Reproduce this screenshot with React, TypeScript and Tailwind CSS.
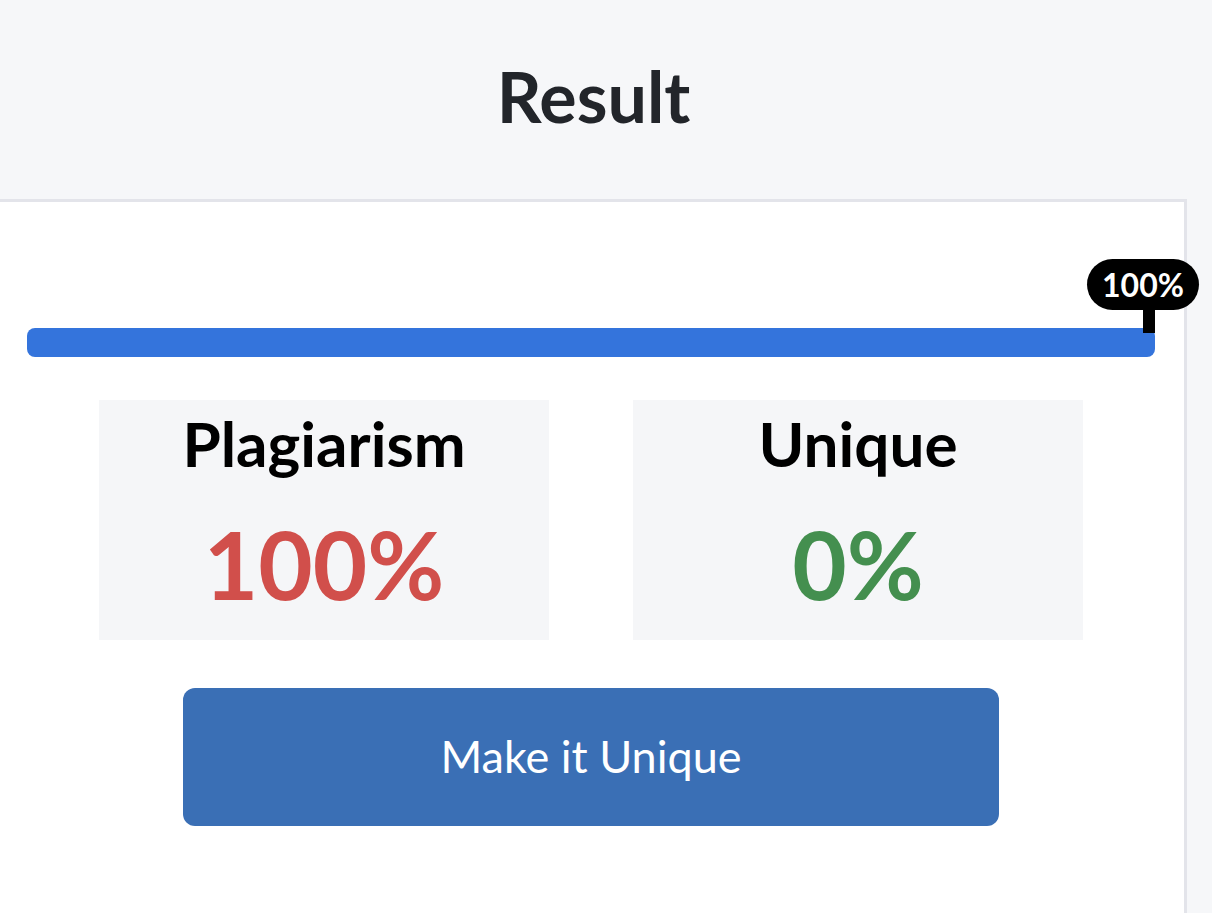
const StatBox = ({ label, value, color }: { label: string; value: string; color: string }) => (
  <div className="flex h-[240px] w-[450px] flex-col items-center bg-[#f5f6f8] pt-[7px]">
    <h3 className="text-[62px] font-bold leading-[72px] text-black">{label}</h3>
    <p className={`mt-[35px] text-[94px] font-bold leading-[100px] ${color}`}>{value}</p>
  </div>
);

const App = () => {
  const percent = 100;

  return (
    <div
      className="min-h-[913px] overflow-hidden bg-[#f6f7f9]"
      style={{ fontFamily: "Lato, 'Noto Sans', sans-serif" }}
    >
      <div className="w-[1187px]">
        <header className="h-[199px] pt-[56px] text-center">
          <h1 className="text-[70px] font-bold leading-[80px] text-[#22252a]">Result</h1>
        </header>
        <section className="min-h-[714px] border-t-[3px] border-r-[3px] border-[#e3e4ea] bg-white pl-[27px] pr-[29px] pt-[57px]">
          <div className="relative pt-[69px]">
            <div className="h-[29px] rounded-[8px] bg-[#3474dc]" style={{ width: `${percent}%` }} />
            <div className="absolute right-[-44px] top-0 flex flex-col items-end">
              <div className="flex h-[51px] w-[112px] items-center justify-center rounded-full bg-black text-[32px] font-bold text-white">
                {percent}%
              </div>
              <div className="mr-[44px] h-[23px] w-[12px] bg-black" />
            </div>
          </div>
          <div className="mt-[43px] flex justify-center gap-[84px]">
            <StatBox label="Plagiarism" value="100%" color="text-[#d14f4b]" />
            <StatBox label="Unique" value="0%" color="text-[#448f4f]" />
          </div>
          <div className="mt-[48px] flex justify-center">
            <button className="h-[138px] w-[816px] rounded-[12px] bg-[#3a6fb5] text-[45px] text-white">
              Make it Unique
            </button>
          </div>
        </section>
      </div>
    </div>
  );
};

export default App;
